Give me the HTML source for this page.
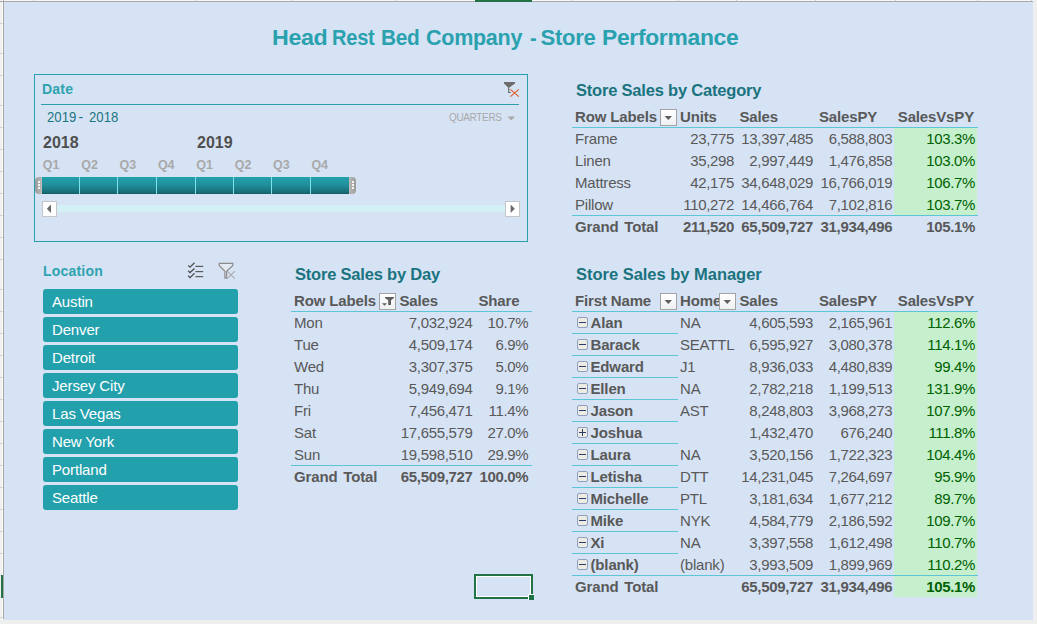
<!DOCTYPE html>
<html><head><meta charset="utf-8"><style>
html,body{margin:0;padding:0;width:1037px;height:624px;overflow:hidden;background:#efefef}
body{position:relative;font-family:"Liberation Sans", sans-serif}
.r{position:absolute;box-sizing:content-box}
.t{position:absolute;white-space:nowrap;font-family:"Liberation Sans", sans-serif}
</style></head><body>
<div class="r" style="left:0;top:0;width:1037px;height:624px;background:#efefef"></div>
<div class="r" style="left:0px;top:0px;width:1033px;height:1px;background:#f7f7f7;"></div>
<div class="r" style="left:0px;top:0px;width:3px;height:620px;background:#f1f1f1;"></div>
<div class="r" style="left:2px;top:0px;width:1px;height:620px;background:#fafafa;"></div>
<div class="r" style="left:0px;top:23px;width:3px;height:1px;background:#d5d5d5;"></div>
<div class="r" style="left:0px;top:53px;width:3px;height:1px;background:#d5d5d5;"></div>
<div class="r" style="left:0px;top:75px;width:3px;height:1px;background:#d5d5d5;"></div>
<div class="r" style="left:0px;top:105px;width:3px;height:1px;background:#d5d5d5;"></div>
<div class="r" style="left:0px;top:127px;width:3px;height:1px;background:#d5d5d5;"></div>
<div class="r" style="left:0px;top:149px;width:3px;height:1px;background:#d5d5d5;"></div>
<div class="r" style="left:0px;top:171px;width:3px;height:1px;background:#d5d5d5;"></div>
<div class="r" style="left:0px;top:193px;width:3px;height:1px;background:#d5d5d5;"></div>
<div class="r" style="left:0px;top:215px;width:3px;height:1px;background:#d5d5d5;"></div>
<div class="r" style="left:0px;top:237px;width:3px;height:1px;background:#d5d5d5;"></div>
<div class="r" style="left:0px;top:259px;width:3px;height:1px;background:#d5d5d5;"></div>
<div class="r" style="left:0px;top:289px;width:3px;height:1px;background:#d5d5d5;"></div>
<div class="r" style="left:0px;top:311px;width:3px;height:1px;background:#d5d5d5;"></div>
<div class="r" style="left:0px;top:333px;width:3px;height:1px;background:#d5d5d5;"></div>
<div class="r" style="left:0px;top:355px;width:3px;height:1px;background:#d5d5d5;"></div>
<div class="r" style="left:0px;top:377px;width:3px;height:1px;background:#d5d5d5;"></div>
<div class="r" style="left:0px;top:399px;width:3px;height:1px;background:#d5d5d5;"></div>
<div class="r" style="left:0px;top:421px;width:3px;height:1px;background:#d5d5d5;"></div>
<div class="r" style="left:0px;top:443px;width:3px;height:1px;background:#d5d5d5;"></div>
<div class="r" style="left:0px;top:465px;width:3px;height:1px;background:#d5d5d5;"></div>
<div class="r" style="left:0px;top:487px;width:3px;height:1px;background:#d5d5d5;"></div>
<div class="r" style="left:0px;top:509px;width:3px;height:1px;background:#d5d5d5;"></div>
<div class="r" style="left:0px;top:531px;width:3px;height:1px;background:#d5d5d5;"></div>
<div class="r" style="left:0px;top:553px;width:3px;height:1px;background:#d5d5d5;"></div>
<div class="r" style="left:0px;top:575px;width:3px;height:1px;background:#d5d5d5;"></div>
<div class="r" style="left:0px;top:597px;width:3px;height:1px;background:#d5d5d5;"></div>
<div class="r" style="left:0px;top:617px;width:3px;height:1px;background:#d5d5d5;"></div>
<div class="r" style="left:0px;top:1px;width:1033px;height:1px;background:#a8a8a8;"></div>
<div class="r" style="left:3px;top:0px;width:1px;height:619px;background:#a8a8a8;"></div>
<div class="r" style="left:4px;top:2px;width:1029px;height:618px;background:#d6e3f5;"></div>
<div class="r" style="left:33px;top:0px;width:1px;height:1px;background:#d0d0d0;"></div>
<div class="r" style="left:195px;top:0px;width:1px;height:1px;background:#d0d0d0;"></div>
<div class="r" style="left:291px;top:0px;width:1px;height:1px;background:#d0d0d0;"></div>
<div class="r" style="left:396px;top:0px;width:1px;height:1px;background:#d0d0d0;"></div>
<div class="r" style="left:572px;top:0px;width:1px;height:1px;background:#d0d0d0;"></div>
<div class="r" style="left:678px;top:0px;width:1px;height:1px;background:#d0d0d0;"></div>
<div class="r" style="left:736px;top:0px;width:1px;height:1px;background:#d0d0d0;"></div>
<div class="r" style="left:815px;top:0px;width:1px;height:1px;background:#d0d0d0;"></div>
<div class="r" style="left:895px;top:0px;width:1px;height:1px;background:#d0d0d0;"></div>
<div class="r" style="left:977px;top:0px;width:1px;height:1px;background:#d0d0d0;"></div>
<div class="r" style="left:1031px;top:0px;width:1px;height:1px;background:#d0d0d0;"></div>
<div class="r" style="left:475px;top:0px;width:57px;height:2px;background:#217346;"></div>
<div class="r" style="left:1px;top:575px;width:2px;height:23px;background:#217346;"></div>
<div class="t" style="left:272.2px;top:23px;font-size:22px;line-height:30px;color:#2aa1ae;font-weight:bold;letter-spacing:-0.28px;transform:scaleX(1.0550);transform-origin:1.4px 0;">Head</div>
<div class="t" style="left:332.4px;top:23px;font-size:22px;line-height:30px;color:#2aa1ae;font-weight:bold;letter-spacing:-0.28px;transform:scaleX(0.9100);transform-origin:0.8px 0;">Rest</div>
<div class="t" style="left:381.2px;top:23px;font-size:22px;line-height:30px;color:#2aa1ae;font-weight:bold;letter-spacing:-0.28px;transform:scaleX(0.9460);transform-origin:0.9px 0;">Bed</div>
<div class="t" style="left:426.4px;top:23px;font-size:22px;line-height:30px;color:#2aa1ae;font-weight:bold;letter-spacing:-0.28px;transform:scaleX(0.9780);transform-origin:0.3px 0;">Company</div>
<div class="t" style="left:530.0px;top:23px;font-size:22px;line-height:30px;color:#2aa1ae;font-weight:bold;letter-spacing:-0.28px;transform:scaleX(0.9000);transform-origin:0.5px 0;">-</div>
<div class="t" style="left:540.6px;top:23px;font-size:22px;line-height:30px;color:#2aa1ae;font-weight:bold;letter-spacing:-0.28px;transform:scaleX(1.0000);transform-origin:0.7px 0;">Store</div>
<div class="t" style="left:601.6px;top:23px;font-size:22px;line-height:30px;color:#2aa1ae;font-weight:bold;letter-spacing:-0.28px;transform:scaleX(1.0380);transform-origin:1.2px 0;">Performance</div>
<div class="r" style="left:34px;top:74px;width:492px;height:166px;border:1px solid #2a9eab"></div>
<div class="r" style="left:41px;top:104px;width:478px;height:1px;background:#2a9eab;"></div>
<div class="t" style="left:42px;top:79px;font-size:14px;line-height:20px;color:#2ea3b0;font-weight:bold;letter-spacing:0.2px;">Date</div>
<svg class="r" style="left:500px;top:78px" width="24" height="22" viewBox="0 0 24 22">
<path d="M4,4 H15 V5.6 L9.3,9.6 V14 H10.8 V15 H8.1 V9.6 L4,5.6 Z" fill="#6b6b6b"/>
<path d="M10.4,11.4 L18.8,18.6 M10.4,18.6 L18.8,11.4" stroke="#e2582f" stroke-width="1.15"/>
</svg>
<div class="t" style="left:46.5px;top:107px;font-size:14px;line-height:20px;color:#1d7680;transform:scaleX(0.94);transform-origin:0 0;">2019</div>
<div class="t" style="left:78.5px;top:107px;font-size:14px;line-height:20px;color:#1d7680;">-</div>
<div class="t" style="left:88.5px;top:107px;font-size:14px;line-height:20px;color:#1d7680;transform:scaleX(0.94);transform-origin:0 0;">2018</div>
<div class="t" style="left:449px;top:108px;font-size:10px;line-height:20px;color:#a9a9a9;letter-spacing:-0.35px;">QUARTERS</div>
<svg class="r" style="left:507px;top:116px" width="9" height="6"><path d="M0.5,0.5 H8 L4.25,4.5 Z" fill="#a9a9a9"/></svg>
<div class="t" style="left:43px;top:132px;font-size:16px;line-height:22px;color:#4f4f4f;font-weight:bold;">2018</div>
<div class="t" style="left:197px;top:132px;font-size:16px;line-height:22px;color:#4f4f4f;font-weight:bold;">2019</div>
<div class="t" style="left:42.8px;top:155px;font-size:12.5px;line-height:20px;color:#a8a8a8;font-weight:bold;">Q1</div>
<div class="t" style="left:81.2px;top:155px;font-size:12.5px;line-height:20px;color:#a8a8a8;font-weight:bold;">Q2</div>
<div class="t" style="left:119.5px;top:155px;font-size:12.5px;line-height:20px;color:#a8a8a8;font-weight:bold;">Q3</div>
<div class="t" style="left:157.9px;top:155px;font-size:12.5px;line-height:20px;color:#a8a8a8;font-weight:bold;">Q4</div>
<div class="t" style="left:196.3px;top:155px;font-size:12.5px;line-height:20px;color:#a8a8a8;font-weight:bold;">Q1</div>
<div class="t" style="left:234.7px;top:155px;font-size:12.5px;line-height:20px;color:#a8a8a8;font-weight:bold;">Q2</div>
<div class="t" style="left:273.1px;top:155px;font-size:12.5px;line-height:20px;color:#a8a8a8;font-weight:bold;">Q3</div>
<div class="t" style="left:311.4px;top:155px;font-size:12.5px;line-height:20px;color:#a8a8a8;font-weight:bold;">Q4</div>
<div class="r" style="left:42px;top:177px;width:307px;height:17px;background:linear-gradient(#23a2ae,#1f8e99 50%,#176971 94%,#0f5259)"></div>
<div class="r" style="left:79px;top:177px;width:1px;height:17px;background:#7fe0ea;"></div>
<div class="r" style="left:117px;top:177px;width:1px;height:17px;background:#7fe0ea;"></div>
<div class="r" style="left:156px;top:177px;width:1px;height:17px;background:#7fe0ea;"></div>
<div class="r" style="left:195px;top:177px;width:1px;height:17px;background:#7fe0ea;"></div>
<div class="r" style="left:233px;top:177px;width:1px;height:17px;background:#7fe0ea;"></div>
<div class="r" style="left:271px;top:177px;width:1px;height:17px;background:#7fe0ea;"></div>
<div class="r" style="left:310px;top:177px;width:1px;height:17px;background:#7fe0ea;"></div>
<div class="r" style="left:35px;top:177px;width:7px;height:17px;background:linear-gradient(90deg,#9b9b9b,#b3b3b3 80%,#c8c0bc);border-radius:4px 0 0 4px"></div>
<div class="r" style="left:349px;top:177px;width:7px;height:17px;background:linear-gradient(270deg,#9b9b9b,#b3b3b3 80%,#c8c0bc);border-radius:0 4px 4px 0"></div>
<div class="r" style="left:38px;top:181px;width:2px;height:2px;background:#f4f4f4;"></div>
<div class="r" style="left:352px;top:181px;width:2px;height:2px;background:#f4f4f4;"></div>
<div class="r" style="left:38px;top:184px;width:2px;height:2px;background:#f4f4f4;"></div>
<div class="r" style="left:352px;top:184px;width:2px;height:2px;background:#f4f4f4;"></div>
<div class="r" style="left:38px;top:187px;width:2px;height:2px;background:#f4f4f4;"></div>
<div class="r" style="left:352px;top:187px;width:2px;height:2px;background:#f4f4f4;"></div>
<div class="r" style="left:57px;top:205px;width:448px;height:7px;background:#d3f0f4;"></div>
<div class="r" style="left:42px;top:201px;width:13px;height:14px;background:#fff;border:1px solid #c6c6c6"></div>
<svg class="r" style="left:46px;top:204px" width="6" height="10"><path d="M5,0.5 V9 L0.8,4.75 Z" fill="#6a6a6a"/></svg>
<div class="r" style="left:505px;top:201px;width:13px;height:14px;background:#fff;border:1px solid #c6c6c6"></div>
<svg class="r" style="left:510px;top:204px" width="6" height="10"><path d="M0.6,0.5 V9 L4.8,4.75 Z" fill="#6a6a6a"/></svg>
<div class="t" style="left:43px;top:261px;font-size:14px;line-height:20px;color:#2ea3b0;font-weight:bold;letter-spacing:0.2px;">Location</div>
<svg class="r" style="left:182px;top:258px" width="26" height="24" viewBox="0 0 26 24">
<g fill="none" stroke="#4d4d4d" stroke-width="1.3">
<path d="M6.2,7.4 L8,9.2 L12.5,4.8"/><path d="M6.2,12.8 L8,14.6 L12.5,10.4"/><path d="M6.2,17.8 L8,19.6 L12.5,15.3"/>
</g>
<g fill="#5a5a5a"><rect x="13.4" y="7.8" width="7.8" height="1.2"/><rect x="13.4" y="13" width="7.8" height="1.2"/><rect x="13.4" y="18" width="7.8" height="1.2"/></g>
</svg>
<svg class="r" style="left:214px;top:258px" width="26" height="24" viewBox="0 0 26 24">
<path d="M5.2,5.4 H18.8 V7.4 L12.6,13.3 V20.2 L10.9,20.2 V13.3 L5.2,7.4 Z" fill="#e4e8f0" stroke="#8c8c8c" stroke-width="1.2"/>
<path d="M13.2,13.2 L20.8,20.6 M13.2,20.6 L20.8,13.2" stroke="#a9a9a9" stroke-width="1.1"/>
</svg>
<div class="r" style="left:43px;top:289px;width:195px;height:25px;background:#22a0ac;border-radius:3px"></div>
<div class="t" style="left:52px;top:292px;font-size:15px;line-height:20px;color:#ffffff;letter-spacing:-0.15px;">Austin</div>
<div class="r" style="left:43px;top:317px;width:195px;height:25px;background:#22a0ac;border-radius:3px"></div>
<div class="t" style="left:52px;top:320px;font-size:15px;line-height:20px;color:#ffffff;letter-spacing:-0.15px;">Denver</div>
<div class="r" style="left:43px;top:345px;width:195px;height:25px;background:#22a0ac;border-radius:3px"></div>
<div class="t" style="left:52px;top:348px;font-size:15px;line-height:20px;color:#ffffff;letter-spacing:-0.15px;">Detroit</div>
<div class="r" style="left:43px;top:373px;width:195px;height:25px;background:#22a0ac;border-radius:3px"></div>
<div class="t" style="left:52px;top:376px;font-size:15px;line-height:20px;color:#ffffff;letter-spacing:-0.15px;">Jersey City</div>
<div class="r" style="left:43px;top:401px;width:195px;height:25px;background:#22a0ac;border-radius:3px"></div>
<div class="t" style="left:52px;top:404px;font-size:15px;line-height:20px;color:#ffffff;letter-spacing:-0.15px;">Las Vegas</div>
<div class="r" style="left:43px;top:429px;width:195px;height:25px;background:#22a0ac;border-radius:3px"></div>
<div class="t" style="left:52px;top:432px;font-size:15px;line-height:20px;color:#ffffff;letter-spacing:-0.15px;">New York</div>
<div class="r" style="left:43px;top:457px;width:195px;height:25px;background:#22a0ac;border-radius:3px"></div>
<div class="t" style="left:52px;top:460px;font-size:15px;line-height:20px;color:#ffffff;letter-spacing:-0.15px;">Portland</div>
<div class="r" style="left:43px;top:485px;width:195px;height:25px;background:#22a0ac;border-radius:3px"></div>
<div class="t" style="left:52px;top:488px;font-size:15px;line-height:20px;color:#ffffff;letter-spacing:-0.15px;">Seattle</div>
<div class="t" style="left:295px;top:259px;font-size:16.5px;line-height:30px;color:#1a737e;font-weight:bold;letter-spacing:-0.2px;">Store Sales by Day</div>
<div class="t" style="left:294px;top:290px;font-size:15px;line-height:22px;color:#595959;font-weight:bold;letter-spacing:-0.15px;">Row Labels</div>
<div class="r" style="left:379px;top:293px;width:15px;height:15px;border:1px solid #a3a3a3;background:linear-gradient(#ffffff,#eef0f3)"></div>
<svg class="r" style="left:379px;top:293px" width="17" height="17" viewBox="0 0 17 17">
<path d="M6,4 H15 V5 L12,7.3 V12 H9.2 V7.3 L6,5 Z" fill="#5f5f5f"/>
<path d="M3,10.2 H8 L5.5,12.8 Z" fill="#5f5f5f"/></svg>
<div class="t" style="left:399.5px;top:290px;font-size:15px;line-height:22px;color:#595959;font-weight:bold;letter-spacing:-0.15px;">Sales</div>
<div class="t" style="left:478.5px;top:290px;font-size:15px;line-height:22px;color:#595959;font-weight:bold;letter-spacing:-0.15px;">Share</div>
<div class="r" style="left:291px;top:311px;width:241px;height:1px;background:#5cc6d6;"></div>
<div class="t" style="left:294px;top:312px;font-size:15px;line-height:22px;color:#595959;letter-spacing:-0.2px;">Mon</div>
<div class="t" style="left:312.5px;width:160px;text-align:right;top:312px;font-size:15px;line-height:22px;color:#595959;letter-spacing:-0.34px;">7,032,924</div>
<div class="t" style="left:368.29999999999995px;width:160px;text-align:right;top:312px;font-size:15px;line-height:22px;color:#595959;letter-spacing:-0.34px;">10.7%</div>
<div class="t" style="left:294px;top:334px;font-size:15px;line-height:22px;color:#595959;letter-spacing:-0.2px;">Tue</div>
<div class="t" style="left:312.5px;width:160px;text-align:right;top:334px;font-size:15px;line-height:22px;color:#595959;letter-spacing:-0.34px;">4,509,174</div>
<div class="t" style="left:368.29999999999995px;width:160px;text-align:right;top:334px;font-size:15px;line-height:22px;color:#595959;letter-spacing:-0.34px;">6.9%</div>
<div class="t" style="left:294px;top:356px;font-size:15px;line-height:22px;color:#595959;letter-spacing:-0.2px;">Wed</div>
<div class="t" style="left:312.5px;width:160px;text-align:right;top:356px;font-size:15px;line-height:22px;color:#595959;letter-spacing:-0.34px;">3,307,375</div>
<div class="t" style="left:368.29999999999995px;width:160px;text-align:right;top:356px;font-size:15px;line-height:22px;color:#595959;letter-spacing:-0.34px;">5.0%</div>
<div class="t" style="left:294px;top:378px;font-size:15px;line-height:22px;color:#595959;letter-spacing:-0.2px;">Thu</div>
<div class="t" style="left:312.5px;width:160px;text-align:right;top:378px;font-size:15px;line-height:22px;color:#595959;letter-spacing:-0.34px;">5,949,694</div>
<div class="t" style="left:368.29999999999995px;width:160px;text-align:right;top:378px;font-size:15px;line-height:22px;color:#595959;letter-spacing:-0.34px;">9.1%</div>
<div class="t" style="left:294px;top:400px;font-size:15px;line-height:22px;color:#595959;letter-spacing:-0.2px;">Fri</div>
<div class="t" style="left:312.5px;width:160px;text-align:right;top:400px;font-size:15px;line-height:22px;color:#595959;letter-spacing:-0.34px;">7,456,471</div>
<div class="t" style="left:368.29999999999995px;width:160px;text-align:right;top:400px;font-size:15px;line-height:22px;color:#595959;letter-spacing:-0.34px;">11.4%</div>
<div class="t" style="left:294px;top:422px;font-size:15px;line-height:22px;color:#595959;letter-spacing:-0.2px;">Sat</div>
<div class="t" style="left:312.5px;width:160px;text-align:right;top:422px;font-size:15px;line-height:22px;color:#595959;letter-spacing:-0.34px;">17,655,579</div>
<div class="t" style="left:368.29999999999995px;width:160px;text-align:right;top:422px;font-size:15px;line-height:22px;color:#595959;letter-spacing:-0.34px;">27.0%</div>
<div class="t" style="left:294px;top:444px;font-size:15px;line-height:22px;color:#595959;letter-spacing:-0.2px;">Sun</div>
<div class="t" style="left:312.5px;width:160px;text-align:right;top:444px;font-size:15px;line-height:22px;color:#595959;letter-spacing:-0.34px;">19,598,510</div>
<div class="t" style="left:368.29999999999995px;width:160px;text-align:right;top:444px;font-size:15px;line-height:22px;color:#595959;letter-spacing:-0.34px;">29.9%</div>
<div class="r" style="left:291px;top:465px;width:241px;height:1px;background:#5cc6d6;"></div>
<div class="t" style="left:294px;top:466px;font-size:15px;line-height:22px;color:#595959;font-weight:bold;letter-spacing:-0.15px;word-spacing:1.8px;">Grand Total</div>
<div class="t" style="left:312.5px;width:160px;text-align:right;top:466px;font-size:15px;line-height:22px;color:#595959;letter-spacing:-0.34px;font-weight:bold;">65,509,727</div>
<div class="t" style="left:368.29999999999995px;width:160px;text-align:right;top:466px;font-size:15px;line-height:22px;color:#595959;letter-spacing:-0.34px;font-weight:bold;">100.0%</div>
<div class="t" style="left:576px;top:75px;font-size:16.5px;line-height:30px;color:#1a737e;font-weight:bold;letter-spacing:-0.2px;">Store Sales by Category</div>
<div class="t" style="left:575px;top:106px;font-size:15px;line-height:22px;color:#595959;font-weight:bold;letter-spacing:-0.15px;">Row Labels</div>
<div class="r" style="left:660px;top:109px;width:15px;height:15px;border:1px solid #a3a3a3;background:linear-gradient(#ffffff,#eef0f3)"></div>
<svg class="r" style="left:660px;top:109px" width="17" height="17" viewBox="0 0 17 17"><path d="M4.6,7 H12 L8.3,11 Z" fill="#5f5f5f"/></svg>
<div class="t" style="left:680px;top:106px;font-size:15px;line-height:22px;color:#595959;font-weight:bold;letter-spacing:-0.15px;">Units</div>
<div class="t" style="left:739.5px;top:106px;font-size:15px;line-height:22px;color:#595959;font-weight:bold;letter-spacing:-0.15px;">Sales</div>
<div class="t" style="left:819px;top:106px;font-size:15px;line-height:22px;color:#595959;font-weight:bold;letter-spacing:-0.15px;">SalesPY</div>
<div class="t" style="left:897.8px;top:106px;font-size:15px;line-height:22px;color:#595959;font-weight:bold;letter-spacing:-0.15px;">SalesVsPY</div>
<div class="r" style="left:572px;top:127px;width:406px;height:1px;background:#5cc6d6;"></div>
<div class="r" style="left:894px;top:128px;width:83px;height:87px;background:#c6efce;"></div>
<div class="t" style="left:575px;top:128px;font-size:15px;line-height:22px;color:#595959;letter-spacing:-0.2px;">Frame</div>
<div class="t" style="left:574px;width:160px;text-align:right;top:128px;font-size:15px;line-height:22px;color:#595959;letter-spacing:-0.34px;">23,775</div>
<div class="t" style="left:653px;width:160px;text-align:right;top:128px;font-size:15px;line-height:22px;color:#595959;letter-spacing:-0.34px;">13,397,485</div>
<div class="t" style="left:732.3px;width:160px;text-align:right;top:128px;font-size:15px;line-height:22px;color:#595959;letter-spacing:-0.34px;">6,588,803</div>
<div class="t" style="left:815px;width:160px;text-align:right;top:128px;font-size:15px;line-height:22px;color:#006100;letter-spacing:-0.34px;">103.3%</div>
<div class="t" style="left:575px;top:150px;font-size:15px;line-height:22px;color:#595959;letter-spacing:-0.2px;">Linen</div>
<div class="t" style="left:574px;width:160px;text-align:right;top:150px;font-size:15px;line-height:22px;color:#595959;letter-spacing:-0.34px;">35,298</div>
<div class="t" style="left:653px;width:160px;text-align:right;top:150px;font-size:15px;line-height:22px;color:#595959;letter-spacing:-0.34px;">2,997,449</div>
<div class="t" style="left:732.3px;width:160px;text-align:right;top:150px;font-size:15px;line-height:22px;color:#595959;letter-spacing:-0.34px;">1,476,858</div>
<div class="t" style="left:815px;width:160px;text-align:right;top:150px;font-size:15px;line-height:22px;color:#006100;letter-spacing:-0.34px;">103.0%</div>
<div class="t" style="left:575px;top:172px;font-size:15px;line-height:22px;color:#595959;letter-spacing:-0.2px;">Mattress</div>
<div class="t" style="left:574px;width:160px;text-align:right;top:172px;font-size:15px;line-height:22px;color:#595959;letter-spacing:-0.34px;">42,175</div>
<div class="t" style="left:653px;width:160px;text-align:right;top:172px;font-size:15px;line-height:22px;color:#595959;letter-spacing:-0.34px;">34,648,029</div>
<div class="t" style="left:732.3px;width:160px;text-align:right;top:172px;font-size:15px;line-height:22px;color:#595959;letter-spacing:-0.34px;">16,766,019</div>
<div class="t" style="left:815px;width:160px;text-align:right;top:172px;font-size:15px;line-height:22px;color:#006100;letter-spacing:-0.34px;">106.7%</div>
<div class="t" style="left:575px;top:194px;font-size:15px;line-height:22px;color:#595959;letter-spacing:-0.2px;">Pillow</div>
<div class="t" style="left:574px;width:160px;text-align:right;top:194px;font-size:15px;line-height:22px;color:#595959;letter-spacing:-0.34px;">110,272</div>
<div class="t" style="left:653px;width:160px;text-align:right;top:194px;font-size:15px;line-height:22px;color:#595959;letter-spacing:-0.34px;">14,466,764</div>
<div class="t" style="left:732.3px;width:160px;text-align:right;top:194px;font-size:15px;line-height:22px;color:#595959;letter-spacing:-0.34px;">7,102,816</div>
<div class="t" style="left:815px;width:160px;text-align:right;top:194px;font-size:15px;line-height:22px;color:#006100;letter-spacing:-0.34px;">103.7%</div>
<div class="r" style="left:572px;top:215px;width:406px;height:1px;background:#5cc6d6;"></div>
<div class="t" style="left:575px;top:216px;font-size:15px;line-height:22px;color:#595959;font-weight:bold;letter-spacing:-0.15px;word-spacing:1.8px;">Grand Total</div>
<div class="t" style="left:574px;width:160px;text-align:right;top:216px;font-size:15px;line-height:22px;color:#595959;letter-spacing:-0.34px;font-weight:bold;">211,520</div>
<div class="t" style="left:653px;width:160px;text-align:right;top:216px;font-size:15px;line-height:22px;color:#595959;letter-spacing:-0.34px;font-weight:bold;">65,509,727</div>
<div class="t" style="left:732.3px;width:160px;text-align:right;top:216px;font-size:15px;line-height:22px;color:#595959;letter-spacing:-0.34px;font-weight:bold;">31,934,496</div>
<div class="t" style="left:815px;width:160px;text-align:right;top:216px;font-size:15px;line-height:22px;color:#595959;letter-spacing:-0.34px;font-weight:bold;">105.1%</div>
<div class="t" style="left:576px;top:259px;font-size:16.5px;line-height:30px;color:#1a737e;font-weight:bold;letter-spacing:-0.02px;">Store Sales by Manager</div>
<div class="t" style="left:575px;top:290px;font-size:15px;line-height:22px;color:#595959;font-weight:bold;letter-spacing:-0.15px;">First Name</div>
<div class="r" style="left:660px;top:293px;width:15px;height:15px;border:1px solid #a3a3a3;background:linear-gradient(#ffffff,#eef0f3)"></div>
<svg class="r" style="left:660px;top:293px" width="17" height="17" viewBox="0 0 17 17"><path d="M4.6,7 H12 L8.3,11 Z" fill="#5f5f5f"/></svg>
<div class="t" style="left:680px;top:290px;font-size:15px;line-height:22px;color:#595959;font-weight:bold;letter-spacing:-0.15px;">Home</div>
<div class="r" style="left:719px;top:293px;width:15px;height:15px;border:1px solid #a3a3a3;background:linear-gradient(#ffffff,#eef0f3)"></div>
<svg class="r" style="left:719px;top:293px" width="17" height="17" viewBox="0 0 17 17"><path d="M4.6,7 H12 L8.3,11 Z" fill="#5f5f5f"/></svg>
<div class="t" style="left:739.5px;top:290px;font-size:15px;line-height:22px;color:#595959;font-weight:bold;letter-spacing:-0.15px;">Sales</div>
<div class="t" style="left:819px;top:290px;font-size:15px;line-height:22px;color:#595959;font-weight:bold;letter-spacing:-0.15px;">SalesPY</div>
<div class="t" style="left:897.8px;top:290px;font-size:15px;line-height:22px;color:#595959;font-weight:bold;letter-spacing:-0.15px;">SalesVsPY</div>
<div class="r" style="left:572px;top:311px;width:406px;height:1px;background:#5cc6d6;"></div>
<div class="r" style="left:894px;top:312px;width:83px;height:285px;background:#c6efce;"></div>
<div class="r" style="left:577px;top:317px;width:9px;height:9px;border:1px solid #8f9fbd;border-radius:2px;background:#ecebe4"></div>
<div class="r" style="left:579px;top:321.6px;width:7px;height:1.4px;background:#2c3b68;"></div>
<div class="t" style="left:590.5px;top:312px;font-size:15px;line-height:22px;color:#595959;font-weight:bold;letter-spacing:-0.15px;">Alan</div>
<div class="t" style="left:680px;top:312px;font-size:15px;line-height:22px;color:#595959;letter-spacing:-0.2px;width:55px;overflow:hidden;white-space:nowrap;">NA</div>
<div class="t" style="left:653px;width:160px;text-align:right;top:312px;font-size:15px;line-height:22px;color:#595959;letter-spacing:-0.34px;">4,605,593</div>
<div class="t" style="left:732.3px;width:160px;text-align:right;top:312px;font-size:15px;line-height:22px;color:#595959;letter-spacing:-0.34px;">2,165,961</div>
<div class="t" style="left:815px;width:160px;text-align:right;top:312px;font-size:15px;line-height:22px;color:#006100;letter-spacing:-0.34px;">112.6%</div>
<div class="r" style="left:572px;top:333px;width:106px;height:1px;background:#5cc6d6;"></div>
<div class="r" style="left:577px;top:339px;width:9px;height:9px;border:1px solid #8f9fbd;border-radius:2px;background:#ecebe4"></div>
<div class="r" style="left:579px;top:343.6px;width:7px;height:1.4px;background:#2c3b68;"></div>
<div class="t" style="left:590.5px;top:334px;font-size:15px;line-height:22px;color:#595959;font-weight:bold;letter-spacing:-0.15px;">Barack</div>
<div class="t" style="left:680px;top:334px;font-size:15px;line-height:22px;color:#595959;letter-spacing:-0.2px;width:55px;overflow:hidden;white-space:nowrap;">SEATTL</div>
<div class="t" style="left:653px;width:160px;text-align:right;top:334px;font-size:15px;line-height:22px;color:#595959;letter-spacing:-0.34px;">6,595,927</div>
<div class="t" style="left:732.3px;width:160px;text-align:right;top:334px;font-size:15px;line-height:22px;color:#595959;letter-spacing:-0.34px;">3,080,378</div>
<div class="t" style="left:815px;width:160px;text-align:right;top:334px;font-size:15px;line-height:22px;color:#006100;letter-spacing:-0.34px;">114.1%</div>
<div class="r" style="left:572px;top:355px;width:106px;height:1px;background:#5cc6d6;"></div>
<div class="r" style="left:577px;top:361px;width:9px;height:9px;border:1px solid #8f9fbd;border-radius:2px;background:#ecebe4"></div>
<div class="r" style="left:579px;top:365.6px;width:7px;height:1.4px;background:#2c3b68;"></div>
<div class="t" style="left:590.5px;top:356px;font-size:15px;line-height:22px;color:#595959;font-weight:bold;letter-spacing:-0.15px;">Edward</div>
<div class="t" style="left:680px;top:356px;font-size:15px;line-height:22px;color:#595959;letter-spacing:-0.2px;width:55px;overflow:hidden;white-space:nowrap;">J1</div>
<div class="t" style="left:653px;width:160px;text-align:right;top:356px;font-size:15px;line-height:22px;color:#595959;letter-spacing:-0.34px;">8,936,033</div>
<div class="t" style="left:732.3px;width:160px;text-align:right;top:356px;font-size:15px;line-height:22px;color:#595959;letter-spacing:-0.34px;">4,480,839</div>
<div class="t" style="left:815px;width:160px;text-align:right;top:356px;font-size:15px;line-height:22px;color:#006100;letter-spacing:-0.34px;">99.4%</div>
<div class="r" style="left:572px;top:377px;width:106px;height:1px;background:#5cc6d6;"></div>
<div class="r" style="left:577px;top:383px;width:9px;height:9px;border:1px solid #8f9fbd;border-radius:2px;background:#ecebe4"></div>
<div class="r" style="left:579px;top:387.6px;width:7px;height:1.4px;background:#2c3b68;"></div>
<div class="t" style="left:590.5px;top:378px;font-size:15px;line-height:22px;color:#595959;font-weight:bold;letter-spacing:-0.15px;">Ellen</div>
<div class="t" style="left:680px;top:378px;font-size:15px;line-height:22px;color:#595959;letter-spacing:-0.2px;width:55px;overflow:hidden;white-space:nowrap;">NA</div>
<div class="t" style="left:653px;width:160px;text-align:right;top:378px;font-size:15px;line-height:22px;color:#595959;letter-spacing:-0.34px;">2,782,218</div>
<div class="t" style="left:732.3px;width:160px;text-align:right;top:378px;font-size:15px;line-height:22px;color:#595959;letter-spacing:-0.34px;">1,199,513</div>
<div class="t" style="left:815px;width:160px;text-align:right;top:378px;font-size:15px;line-height:22px;color:#006100;letter-spacing:-0.34px;">131.9%</div>
<div class="r" style="left:572px;top:399px;width:106px;height:1px;background:#5cc6d6;"></div>
<div class="r" style="left:577px;top:405px;width:9px;height:9px;border:1px solid #8f9fbd;border-radius:2px;background:#ecebe4"></div>
<div class="r" style="left:579px;top:409.6px;width:7px;height:1.4px;background:#2c3b68;"></div>
<div class="t" style="left:590.5px;top:400px;font-size:15px;line-height:22px;color:#595959;font-weight:bold;letter-spacing:-0.15px;">Jason</div>
<div class="t" style="left:680px;top:400px;font-size:15px;line-height:22px;color:#595959;letter-spacing:-0.2px;width:55px;overflow:hidden;white-space:nowrap;">AST</div>
<div class="t" style="left:653px;width:160px;text-align:right;top:400px;font-size:15px;line-height:22px;color:#595959;letter-spacing:-0.34px;">8,248,803</div>
<div class="t" style="left:732.3px;width:160px;text-align:right;top:400px;font-size:15px;line-height:22px;color:#595959;letter-spacing:-0.34px;">3,968,273</div>
<div class="t" style="left:815px;width:160px;text-align:right;top:400px;font-size:15px;line-height:22px;color:#006100;letter-spacing:-0.34px;">107.9%</div>
<div class="r" style="left:572px;top:421px;width:106px;height:1px;background:#5cc6d6;"></div>
<div class="r" style="left:577px;top:427px;width:9px;height:9px;border:1px solid #8f9fbd;border-radius:2px;background:#ecebe4"></div>
<div class="r" style="left:579px;top:431.6px;width:7px;height:1.4px;background:#2c3b68;"></div>
<div class="r" style="left:581.8px;top:428.8px;width:1.4px;height:7px;background:#2c3b68;"></div>
<div class="t" style="left:590.5px;top:422px;font-size:15px;line-height:22px;color:#595959;font-weight:bold;letter-spacing:-0.15px;">Joshua</div>
<div class="t" style="left:653px;width:160px;text-align:right;top:422px;font-size:15px;line-height:22px;color:#595959;letter-spacing:-0.34px;">1,432,470</div>
<div class="t" style="left:732.3px;width:160px;text-align:right;top:422px;font-size:15px;line-height:22px;color:#595959;letter-spacing:-0.34px;">676,240</div>
<div class="t" style="left:815px;width:160px;text-align:right;top:422px;font-size:15px;line-height:22px;color:#006100;letter-spacing:-0.34px;">111.8%</div>
<div class="r" style="left:572px;top:443px;width:106px;height:1px;background:#5cc6d6;"></div>
<div class="r" style="left:577px;top:449px;width:9px;height:9px;border:1px solid #8f9fbd;border-radius:2px;background:#ecebe4"></div>
<div class="r" style="left:579px;top:453.6px;width:7px;height:1.4px;background:#2c3b68;"></div>
<div class="t" style="left:590.5px;top:444px;font-size:15px;line-height:22px;color:#595959;font-weight:bold;letter-spacing:-0.15px;">Laura</div>
<div class="t" style="left:680px;top:444px;font-size:15px;line-height:22px;color:#595959;letter-spacing:-0.2px;width:55px;overflow:hidden;white-space:nowrap;">NA</div>
<div class="t" style="left:653px;width:160px;text-align:right;top:444px;font-size:15px;line-height:22px;color:#595959;letter-spacing:-0.34px;">3,520,156</div>
<div class="t" style="left:732.3px;width:160px;text-align:right;top:444px;font-size:15px;line-height:22px;color:#595959;letter-spacing:-0.34px;">1,722,323</div>
<div class="t" style="left:815px;width:160px;text-align:right;top:444px;font-size:15px;line-height:22px;color:#006100;letter-spacing:-0.34px;">104.4%</div>
<div class="r" style="left:572px;top:465px;width:106px;height:1px;background:#5cc6d6;"></div>
<div class="r" style="left:577px;top:471px;width:9px;height:9px;border:1px solid #8f9fbd;border-radius:2px;background:#ecebe4"></div>
<div class="r" style="left:579px;top:475.6px;width:7px;height:1.4px;background:#2c3b68;"></div>
<div class="t" style="left:590.5px;top:466px;font-size:15px;line-height:22px;color:#595959;font-weight:bold;letter-spacing:-0.15px;">Letisha</div>
<div class="t" style="left:680px;top:466px;font-size:15px;line-height:22px;color:#595959;letter-spacing:-0.2px;width:55px;overflow:hidden;white-space:nowrap;">DTT</div>
<div class="t" style="left:653px;width:160px;text-align:right;top:466px;font-size:15px;line-height:22px;color:#595959;letter-spacing:-0.34px;">14,231,045</div>
<div class="t" style="left:732.3px;width:160px;text-align:right;top:466px;font-size:15px;line-height:22px;color:#595959;letter-spacing:-0.34px;">7,264,697</div>
<div class="t" style="left:815px;width:160px;text-align:right;top:466px;font-size:15px;line-height:22px;color:#006100;letter-spacing:-0.34px;">95.9%</div>
<div class="r" style="left:572px;top:487px;width:106px;height:1px;background:#5cc6d6;"></div>
<div class="r" style="left:577px;top:493px;width:9px;height:9px;border:1px solid #8f9fbd;border-radius:2px;background:#ecebe4"></div>
<div class="r" style="left:579px;top:497.6px;width:7px;height:1.4px;background:#2c3b68;"></div>
<div class="t" style="left:590.5px;top:488px;font-size:15px;line-height:22px;color:#595959;font-weight:bold;letter-spacing:-0.15px;">Michelle</div>
<div class="t" style="left:680px;top:488px;font-size:15px;line-height:22px;color:#595959;letter-spacing:-0.2px;width:55px;overflow:hidden;white-space:nowrap;">PTL</div>
<div class="t" style="left:653px;width:160px;text-align:right;top:488px;font-size:15px;line-height:22px;color:#595959;letter-spacing:-0.34px;">3,181,634</div>
<div class="t" style="left:732.3px;width:160px;text-align:right;top:488px;font-size:15px;line-height:22px;color:#595959;letter-spacing:-0.34px;">1,677,212</div>
<div class="t" style="left:815px;width:160px;text-align:right;top:488px;font-size:15px;line-height:22px;color:#006100;letter-spacing:-0.34px;">89.7%</div>
<div class="r" style="left:572px;top:509px;width:106px;height:1px;background:#5cc6d6;"></div>
<div class="r" style="left:577px;top:515px;width:9px;height:9px;border:1px solid #8f9fbd;border-radius:2px;background:#ecebe4"></div>
<div class="r" style="left:579px;top:519.6px;width:7px;height:1.4px;background:#2c3b68;"></div>
<div class="t" style="left:590.5px;top:510px;font-size:15px;line-height:22px;color:#595959;font-weight:bold;letter-spacing:-0.15px;">Mike</div>
<div class="t" style="left:680px;top:510px;font-size:15px;line-height:22px;color:#595959;letter-spacing:-0.2px;width:55px;overflow:hidden;white-space:nowrap;">NYK</div>
<div class="t" style="left:653px;width:160px;text-align:right;top:510px;font-size:15px;line-height:22px;color:#595959;letter-spacing:-0.34px;">4,584,779</div>
<div class="t" style="left:732.3px;width:160px;text-align:right;top:510px;font-size:15px;line-height:22px;color:#595959;letter-spacing:-0.34px;">2,186,592</div>
<div class="t" style="left:815px;width:160px;text-align:right;top:510px;font-size:15px;line-height:22px;color:#006100;letter-spacing:-0.34px;">109.7%</div>
<div class="r" style="left:572px;top:531px;width:106px;height:1px;background:#5cc6d6;"></div>
<div class="r" style="left:577px;top:537px;width:9px;height:9px;border:1px solid #8f9fbd;border-radius:2px;background:#ecebe4"></div>
<div class="r" style="left:579px;top:541.6px;width:7px;height:1.4px;background:#2c3b68;"></div>
<div class="t" style="left:590.5px;top:532px;font-size:15px;line-height:22px;color:#595959;font-weight:bold;letter-spacing:-0.15px;">Xi</div>
<div class="t" style="left:680px;top:532px;font-size:15px;line-height:22px;color:#595959;letter-spacing:-0.2px;width:55px;overflow:hidden;white-space:nowrap;">NA</div>
<div class="t" style="left:653px;width:160px;text-align:right;top:532px;font-size:15px;line-height:22px;color:#595959;letter-spacing:-0.34px;">3,397,558</div>
<div class="t" style="left:732.3px;width:160px;text-align:right;top:532px;font-size:15px;line-height:22px;color:#595959;letter-spacing:-0.34px;">1,612,498</div>
<div class="t" style="left:815px;width:160px;text-align:right;top:532px;font-size:15px;line-height:22px;color:#006100;letter-spacing:-0.34px;">110.7%</div>
<div class="r" style="left:572px;top:553px;width:106px;height:1px;background:#5cc6d6;"></div>
<div class="r" style="left:577px;top:559px;width:9px;height:9px;border:1px solid #8f9fbd;border-radius:2px;background:#ecebe4"></div>
<div class="r" style="left:579px;top:563.6px;width:7px;height:1.4px;background:#2c3b68;"></div>
<div class="t" style="left:590.5px;top:554px;font-size:15px;line-height:22px;color:#595959;font-weight:bold;letter-spacing:-0.15px;">(blank)</div>
<div class="t" style="left:680px;top:554px;font-size:15px;line-height:22px;color:#595959;letter-spacing:-0.2px;width:55px;overflow:hidden;white-space:nowrap;">(blank)</div>
<div class="t" style="left:653px;width:160px;text-align:right;top:554px;font-size:15px;line-height:22px;color:#595959;letter-spacing:-0.34px;">3,993,509</div>
<div class="t" style="left:732.3px;width:160px;text-align:right;top:554px;font-size:15px;line-height:22px;color:#595959;letter-spacing:-0.34px;">1,899,969</div>
<div class="t" style="left:815px;width:160px;text-align:right;top:554px;font-size:15px;line-height:22px;color:#006100;letter-spacing:-0.34px;">110.2%</div>
<div class="r" style="left:572px;top:575px;width:406px;height:1px;background:#5cc6d6;"></div>
<div class="t" style="left:575px;top:576px;font-size:15px;line-height:22px;color:#595959;font-weight:bold;letter-spacing:-0.15px;word-spacing:1.8px;">Grand Total</div>
<div class="t" style="left:653px;width:160px;text-align:right;top:576px;font-size:15px;line-height:22px;color:#595959;letter-spacing:-0.34px;font-weight:bold;">65,509,727</div>
<div class="t" style="left:732.3px;width:160px;text-align:right;top:576px;font-size:15px;line-height:22px;color:#595959;letter-spacing:-0.34px;font-weight:bold;">31,934,496</div>
<div class="t" style="left:815px;width:160px;text-align:right;top:576px;font-size:15px;line-height:22px;color:#006100;letter-spacing:-0.34px;font-weight:bold;">105.1%</div>
<div class="r" style="left:474px;top:574px;width:55px;height:21px;border:2px solid #217346;box-shadow:inset 0 0 0 1px #fff"></div>
<div class="r" style="left:528px;top:594px;width:6px;height:6px;background:#ffffff;"></div>
<div class="r" style="left:529px;top:595px;width:5px;height:5px;background:#217346;"></div>
</body></html>
